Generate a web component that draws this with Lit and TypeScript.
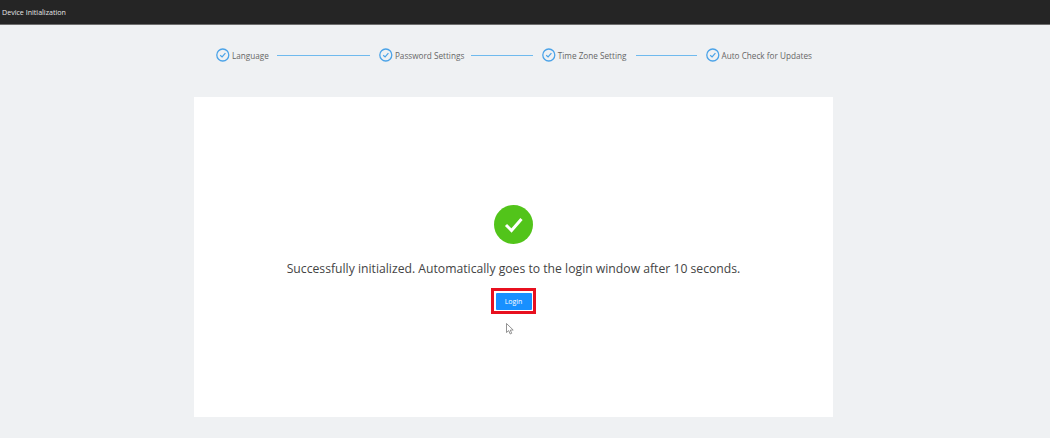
import { LitElement, html, css, svg } from "lit";
import { customElement } from "lit/decorators.js";

const steps = ["Language", "Password Settings", "Time Zone Setting", "Auto Check for Updates"];
const lines = [
  { width: 93, before: 8.5 },
  { width: 62, before: 7 },
  { width: 61, before: 9.5 },
];

@customElement("app-root")
export class AppRoot extends LitElement {
  static styles = css`
    :host {
      display: block;
      width: 1050px;
      height: 438px;
      overflow: hidden;
      background: #eff1f3;
      font-family: "Open Sans", "Noto Sans", sans-serif;
    }
    .bar {
      height: 24px;
      background: #252525;
      border-bottom: 1px solid #6d6d6d;
      display: flex;
      align-items: center;
      padding-left: 2px;
      color: #e6e6e6;
      font-size: 7.1px;
    }
    .steps {
      display: flex;
      align-items: center;
      height: 24px;
      margin: 18px 0 0 216px;
    }
    .step {
      display: flex;
      align-items: center;
      gap: 2px;
      color: #666;
      font-size: 8.2px;
    }
    .step svg { display: block; flex: none; }
    .line {
      height: 1px;
      background: #6fbaee;
      margin-right: 8.5px;
    }
    .card {
      position: relative;
      box-sizing: border-box;
      width: 639px;
      height: 320px;
      margin: 30px 0 0 194px;
      background: #fff;
      display: flex;
      flex-direction: column;
      align-items: center;
      padding-top: 108px;
    }
    .msg {
      margin-top: 15px;
      height: 20px;
      line-height: 20px;
      font-size: 12.2px;
      color: #444;
      white-space: nowrap;
    }
    .mark {
      box-sizing: border-box;
      margin-top: 9px;
      width: 45px;
      height: 26px;
      border: 3px solid #e8101f;
      display: flex;
      align-items: center;
      justify-content: center;
    }
    button {
      width: 36px;
      height: 17px;
      padding: 0;
      border: 0;
      border-radius: 1px;
      background: #1890ff;
      color: #fff;
      font-family: inherit;
      font-size: 7px;
    }
    .cursor {
      position: absolute;
      left: 312px;
      top: 226px;
    }
  `;

  private check() {
    return svg`<svg width="14" height="14" viewBox="0 0 14 14" fill="none">
      <circle cx="6.8" cy="7" r="6" stroke="#4ba3e8" stroke-width="1.3"/>
      <path d="M4.2 7.2 L6.1 9 L9.4 5.2" stroke="#4ba3e8" stroke-width="1.2"/>
    </svg>`;
  }

  render() {
    return html`
      <div class="bar">Device Initialization</div>
      <div class="steps">
        ${steps.map(
          (s, i) => html`
            <div class="step">${this.check()}<span>${s}</span></div>
            ${i < lines.length
              ? html`<div class="line" style="width:${lines[i].width}px;margin-left:${lines[i].before}px"></div>`
              : ""}
          `
        )}
      </div>
      <div class="card">
        <svg width="39" height="39" viewBox="0 0 39 39">
          <circle cx="19.5" cy="19.5" r="19.5" fill="#52c41a"/>
          <path d="M12 20 L17.5 25.5 L27.5 14" fill="none" stroke="#fff" stroke-width="3"/>
        </svg>
        <div class="msg">Successfully initialized. Automatically goes to the login window after 10 seconds.</div>
        <div class="mark"><button>Login</button></div>
        <svg class="cursor" width="9" height="13" viewBox="0 0 9 13">
          <path d="M0.5 0.5 L0.5 9.5 L2.7 7.6 L4.2 11 L5.7 10.3 L4.3 7.1 L7.2 7 Z" fill="#fff" stroke="#777" stroke-width="0.8"/>
        </svg>
      </div>
    `;
  }
}
